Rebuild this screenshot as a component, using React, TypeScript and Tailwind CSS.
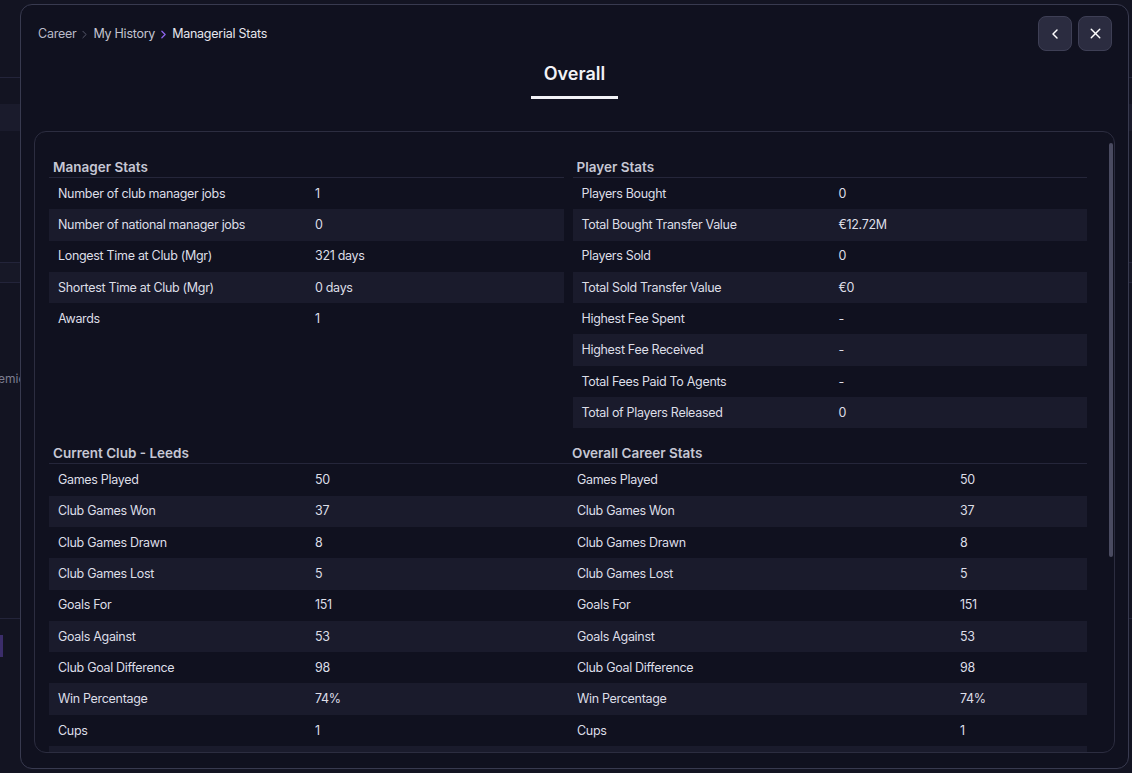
import { ChevronLeft, ChevronRight, X } from "lucide-react";

type Row = [string, string];

const managerStats: Row[] = [
  ["Number of club manager jobs", "1"],
  ["Number of national manager jobs", "0"],
  ["Longest Time at Club (Mgr)", "321 days"],
  ["Shortest Time at Club (Mgr)", "0 days"],
  ["Awards", "1"],
];

const playerStats: Row[] = [
  ["Players Bought", "0"],
  ["Total Bought Transfer Value", "€12.72M"],
  ["Players Sold", "0"],
  ["Total Sold Transfer Value", "€0"],
  ["Highest Fee Spent", "-"],
  ["Highest Fee Received", "-"],
  ["Total Fees Paid To Agents", "-"],
  ["Total of Players Released", "0"],
];

// last row is only partly in view, under the fold of the scroll area
const clubStats: Row[] = [
  ["Games Played", "50"],
  ["Club Games Won", "37"],
  ["Club Games Drawn", "8"],
  ["Club Games Lost", "5"],
  ["Goals For", "151"],
  ["Goals Against", "53"],
  ["Club Goal Difference", "98"],
  ["Win Percentage", "74%"],
  ["Cups", "1"],
  ["", ""],
];

function StatTable({ title, rows }: { title: string; rows: Row[] }) {
  return (
    <div>
      <div className="h-[21px] border-b border-[#25263a] pl-[4px] text-[13.5px] font-semibold leading-[20px] text-[#c6c7d4]">{title}</div>
      {rows.map(([label, value], i) => (
        <div key={label} className={`flex h-[31.3px] items-center pl-[9px] pt-[1px] text-[12.5px] tracking-[-0.025em] text-[#dddee7] ${i % 2 === 1 ? "bg-[#1a1b2c]" : ""}`}>
          <span className="w-[257px]">{label}</span>
          <span>{value}</span>
        </div>
      ))}
    </div>
  );
}

function Background() {
  return (
    <div className="flex h-full w-full flex-col bg-[#131422]">
      <div className="h-[78px] border-b border-[#23243a]" />
      <div className="h-[26px]" />
      <div className="h-[27px] bg-[#1a1b2c]" />
      <div className="h-[132px] border-b border-[#23243a]" />
      <div className="h-[20px] border-b border-[#23243a] bg-[#171827]" />
      <div className="h-[88px]" />
      <div className="-ml-[14px] text-[12px] leading-[16px] text-[#7d7e90]">Premier League</div>
      <div className="h-[232px] border-b border-[#23243a]" />
      <div className="mt-[16px] h-[22px] w-[3px] bg-[#3b2d6a]" />
    </div>
  );
}

export default function App() {
  return (
    <div className="relative h-[773px] w-[1132px] overflow-hidden font-['Inter','Noto_Sans',sans-serif]">
      <Background />

      <div className="absolute left-[20px] top-[4px] flex h-[765px] w-[1109px] flex-col rounded-[12px] border border-[#383a4f] bg-[#10111f]">
        <div className="flex items-start justify-between pl-[17px] pr-[16px] pt-[11px]">
          <div className="mt-[10px] flex items-center gap-[2px] text-[12.5px] leading-[16px] tracking-[-0.02em]">
            <span className="text-[#b9bac8]">Career</span>
            <ChevronRight size={13} strokeWidth={1.6} className="text-[#5f6074]" />
            <span className="text-[#c3c4d1]">My History</span>
            <ChevronRight size={13} strokeWidth={2.4} className="text-[#8b63ec]" />
            <span className="text-[#e6e6ee]">Managerial Stats</span>
          </div>
          <div className="flex gap-[6px]">
            <button className="flex h-[35px] w-[34px] items-center justify-center rounded-[8px] border border-[#3e3f55] bg-[#2b2c40] text-white">
              <ChevronLeft size={16} strokeWidth={2.2} />
            </button>
            <button className="flex h-[35px] w-[34px] items-center justify-center rounded-[8px] border border-[#3e3f55] bg-[#2b2c40] text-white">
              <X size={17} strokeWidth={2} />
            </button>
          </div>
        </div>

        <div className="mt-[11px] flex justify-center">
          <div className="flex w-[87px] flex-col items-center border-b-[3px] border-[#f2f2f6] pb-[10px] text-[18px] font-semibold leading-[24px] text-[#f2f2f6]">Overall</div>
        </div>

        <div className="relative mx-[13px] mt-[32px] h-[622px] overflow-hidden rounded-[12px] border border-[#2c2d40] bg-[#10111f]">
          <div className="absolute right-[1px] top-[11px] h-[414px] w-[4px] rounded-full bg-[#4a4b61]" />
          <div className="pl-[14px] pr-[27px] pt-[25px]">
            <div className="grid grid-cols-2 gap-[9px]">
              <StatTable title="Manager Stats" rows={managerStats} />
              <StatTable title="Player Stats" rows={playerStats} />
            </div>

            <div className="mt-[15px] flex h-[21px] border-b border-[#25263a] text-[13.5px] font-semibold leading-[20px] text-[#c6c7d4]">
              <span className="w-[523px] pl-[4px]">Current Club - Leeds</span>
              <span>Overall Career Stats</span>
            </div>
            {clubStats.map(([label, value], i) => (
              <div key={i} className={`flex h-[31.3px] items-center pl-[9px] pt-[1px] text-[12.5px] tracking-[-0.025em] text-[#dddee7] ${i % 2 === 1 ? "bg-[#1a1b2c]" : ""}`}>
                <span className="w-[257px]">{label}</span>
                <span className="w-[262px]">{value}</span>
                <span className="w-[383px]">{label}</span>
                <span>{value}</span>
              </div>
            ))}
          </div>
        </div>
      </div>
    </div>
  );
}
